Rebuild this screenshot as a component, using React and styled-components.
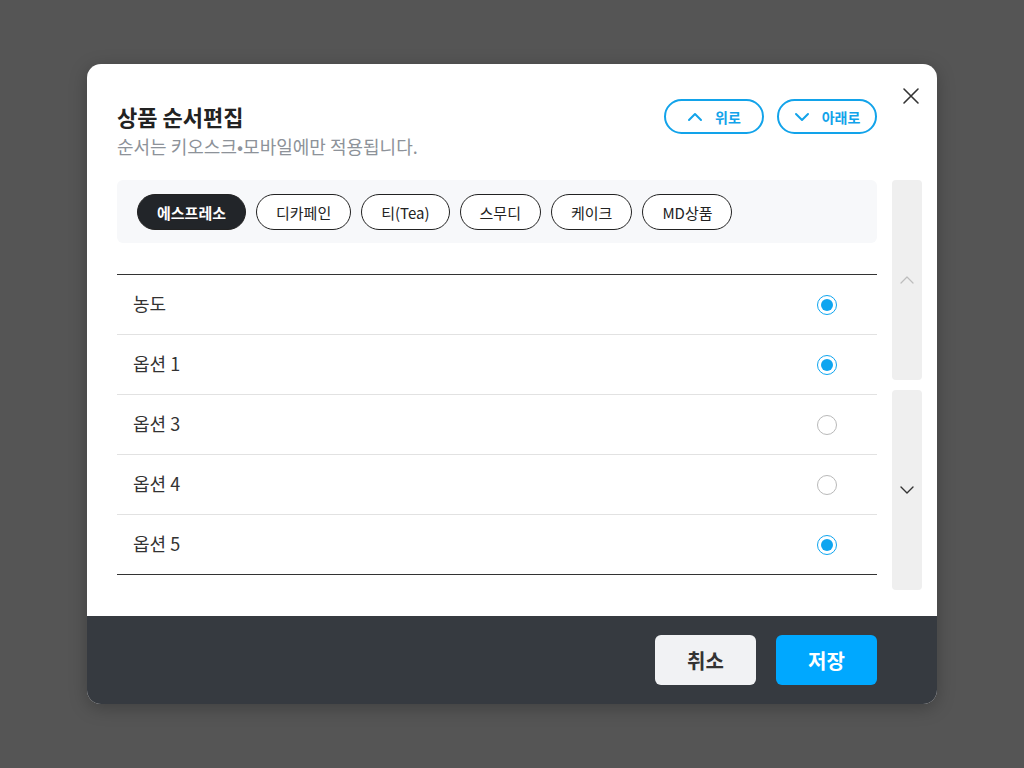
import React, { useState } from "react";
import styled, { createGlobalStyle } from "styled-components";

const GlobalStyle = createGlobalStyle`
  html, body {
    margin: 0;
    padding: 0;
    background: #555555;
    font-family: "Noto Sans CJK KR", "Noto Sans", sans-serif;
  }
  * { box-sizing: border-box; }
`;

const Overlay = styled.div`
  width: 1024px;
  height: 768px;
  display: flex;
  align-items: flex-start;
  justify-content: center;
  padding-top: 64px;
  background: #555555;
`;

const Modal = styled.div`
  position: relative;
  width: 850px;
  height: 640px;
  background: #fff;
  border-radius: 14px;
  overflow: hidden;
  box-shadow: 0 4px 18px rgba(0, 0, 0, 0.25);
  display: flex;
  flex-direction: column;
`;

const Content = styled.div`
  flex: 1;
  padding: 35px 15px 0 30px;
`;

const Header = styled.div`
  width: 760px;
  display: flex;
  justify-content: space-between;
  align-items: flex-start;
  margin-bottom: 21px;
`;

const Title = styled.h2`
  margin: 0;
  font-size: 22px;
  line-height: 34px;
  font-weight: 700;
  color: #222;
`;

const Subtitle = styled.p`
  margin: 0;
  font-size: 18px;
  line-height: 26px;
  color: #8d9299;
`;

const MoveGroup = styled.div`
  display: flex;
  gap: 13px;
`;

const MoveButton = styled.button`
  width: 100px;
  height: 35px;
  border: 2px solid #12a3ea;
  border-radius: 18px;
  background: #fff;
  color: #12a3ea;
  font-family: inherit;
  font-size: 14px;
  font-weight: 700;
  display: flex;
  align-items: center;
  justify-content: center;
  gap: 12px;
  cursor: pointer;
  padding: 0;
`;

const CloseButton = styled.button`
  position: absolute;
  top: 22px;
  right: 16px;
  width: 20px;
  height: 20px;
  padding: 0;
  border: none;
  background: none;
  cursor: pointer;
  display: flex;
  align-items: center;
  justify-content: center;
`;

const Body = styled.div`
  display: grid;
  grid-template-columns: 760px 30px;
  column-gap: 15px;
`;

const Main = styled.div`
  display: flex;
  flex-direction: column;
`;

const TabBox = styled.div`
  height: 63px;
  background: #f7f8fa;
  border-radius: 6px;
  padding: 14px 20px 13px;
  display: flex;
  gap: 10px;
  margin-bottom: 31px;
`;

const Chip = styled.button`
  height: 36px;
  padding: 0 19px;
  border-radius: 18px;
  border: 1px solid #222;
  background: ${(p) => (p.$active ? "#222529" : "#fff")};
  color: ${(p) => (p.$active ? "#fff" : "#222")};
  font-family: inherit;
  font-size: 15px;
  font-weight: ${(p) => (p.$active ? 700 : 400)};
  cursor: pointer;
  white-space: nowrap;
`;

const List = styled.ul`
  list-style: none;
  margin: 0;
  padding: 0;
  border-bottom: 1px solid #333;
`;

const Row = styled.li`
  height: 60px;
  display: flex;
  align-items: center;
  justify-content: space-between;
  padding: 0 40px 0 16px;
  font-size: 18px;
  color: #333;
  border-top: 1px solid ${(p) => (p.$first ? "#333" : "#e2e2e2")};
  cursor: pointer;
`;

const Label = styled.span`
  padding-bottom: 3px;
`;

const Radio = styled.span`
  width: 20px;
  height: 20px;
  border-radius: 50%;
  border: ${(p) => (p.$checked ? "1.5px solid #0ea5f0" : "1px solid #b9b9b9")};
  display: flex;
  align-items: center;
  justify-content: center;
  &::after {
    content: "";
    width: 12px;
    height: 12px;
    border-radius: 50%;
    background: #0ea5f0;
    display: ${(p) => (p.$checked ? "block" : "none")};
  }
`;

const ScrollCol = styled.div`
  display: flex;
  flex-direction: column;
  gap: 10px;
`;

const ScrollButton = styled.button`
  height: 200px;
  width: 30px;
  border: none;
  border-radius: 4px;
  background: #efefef;
  padding: 0;
  display: flex;
  align-items: center;
  justify-content: center;
  cursor: pointer;
`;

const Footer = styled.div`
  height: 88px;
  background: #363a40;
  display: flex;
  justify-content: flex-end;
  align-items: center;
  gap: 20px;
  padding: 0 60px 0 0;
`;

const FooterButton = styled.button`
  width: 101px;
  height: 50px;
  border: none;
  border-radius: 6px;
  background: ${(p) => (p.$primary ? "#00a8ff" : "#f1f2f4")};
  color: ${(p) => (p.$primary ? "#fff" : "#333")};
  font-family: inherit;
  font-size: 20px;
  font-weight: 700;
  cursor: pointer;
`;

const Chevron = ({ up, color = "currentColor", size = 16, width = 1.8 }) => (
  <svg width={size} height={size} viewBox="0 0 16 16" fill="none">
    <path
      d={up ? "M2 11 L8 5 L14 11" : "M2 5 L8 11 L14 5"}
      stroke={color}
      strokeWidth={width}
      strokeLinecap="round"
      strokeLinejoin="round"
    />
  </svg>
);

const categories = ["에스프레소", "디카페인", "티(Tea)", "스무디", "케이크", "MD상품"];

const initialOptions = [
  { name: "농도", checked: true },
  { name: "옵션 1", checked: true },
  { name: "옵션 3", checked: false },
  { name: "옵션 4", checked: false },
  { name: "옵션 5", checked: true },
];

export default function App() {
  const [active, setActive] = useState(0);
  const [options, setOptions] = useState(initialOptions);

  const toggle = (i) =>
    setOptions((prev) => prev.map((o, idx) => (idx === i ? { ...o, checked: !o.checked } : o)));

  return (
    <>
      <GlobalStyle />
      <Overlay>
        <Modal>
          <CloseButton aria-label="닫기">
            <svg width="18" height="18" viewBox="0 0 18 18">
              <path d="M2 2 L16 16 M16 2 L2 16" stroke="#333" strokeWidth="1.6" strokeLinecap="round" />
            </svg>
          </CloseButton>
          <Content>
            <Header>
              <div>
                <Title>상품 순서편집</Title>
                <Subtitle>순서는 키오스크•모바일에만 적용됩니다.</Subtitle>
              </div>
              <MoveGroup>
                <MoveButton>
                  <Chevron up size={16} width={2} />
                  위로
                </MoveButton>
                <MoveButton>
                  <Chevron size={16} width={2} />
                  아래로
                </MoveButton>
              </MoveGroup>
            </Header>
            <Body>
              <Main>
                <TabBox>
                  {categories.map((c, i) => (
                    <Chip key={c} $active={i === active} onClick={() => setActive(i)}>
                      {c}
                    </Chip>
                  ))}
                </TabBox>
                <List>
                  {options.map((o, i) => (
                    <Row key={o.name} $first={i === 0} onClick={() => toggle(i)}>
                      <Label>{o.name}</Label>
                      <Radio $checked={o.checked} />
                    </Row>
                  ))}
                </List>
              </Main>
              <ScrollCol>
                <ScrollButton aria-label="위로 스크롤">
                  <Chevron up color="#bdbdbd" size={16} width={1.2} />
                </ScrollButton>
                <ScrollButton aria-label="아래로 스크롤">
                  <Chevron color="#333" size={16} width={1.4} />
                </ScrollButton>
              </ScrollCol>
            </Body>
          </Content>
          <Footer>
            <FooterButton>취소</FooterButton>
            <FooterButton $primary>저장</FooterButton>
          </Footer>
        </Modal>
      </Overlay>
    </>
  );
}
